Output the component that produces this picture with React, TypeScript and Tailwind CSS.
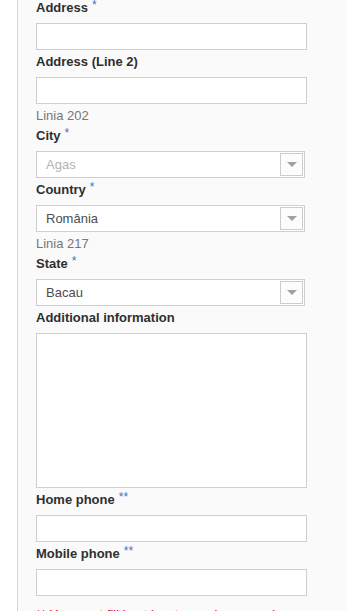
import React from "react";

function Req({ n = 1 }: { n?: number }) {
  return (
    <span className="relative -top-[3px] ml-[4px] text-[12px] font-normal text-[#3f74c0]">
      {n === 2 ? "**" : "*"}
    </span>
  );
}

function Label({ children, first }: { children: React.ReactNode; first?: boolean }) {
  return (
    <div
      className={`${first ? "mt-[-1px]" : "mt-[3px]"} mb-[6px] leading-[18px] font-bold text-[#2f2f2f]`}
    >
      {children}
    </div>
  );
}

function TextInput() {
  return <input className="block h-[27px] w-[271px] border border-[#cfcfcf] bg-white" />;
}

function Note({ children }: { children: React.ReactNode }) {
  return <div className="mt-[4px] leading-[16px] text-[#777]">{children}</div>;
}

function Select({ value, disabled }: { value: string; disabled?: boolean }) {
  return (
    <div className="flex h-[27px] w-[269px] items-center border border-[#cfcfcf] bg-white">
      <span className={`flex-1 pl-[9px] ${disabled ? "text-[#b3b3b3]" : "text-[#4d4d4d]"}`}>
        {value}
      </span>
      <div className="mr-px flex h-[23px] w-[23px] items-center justify-center border border-[#cccccc] bg-[#fcfcfc]">
        <div className="h-0 w-0 border-l-[5px] border-r-[5px] border-t-[5px] border-l-transparent border-r-transparent border-t-[#a0a0a0]" />
      </div>
    </div>
  );
}

export default function App() {
  return (
    <div className="flex h-[611px] overflow-hidden bg-white font-['Liberation_Sans',Arial,sans-serif] text-[13px]">
      <div className="w-[17px] shrink-0 bg-white" />
      <div className="flex-1 border-l border-[#d6d6d6] bg-[#fafafa] pl-[18px]">
        <Label first>
          Address<Req />
        </Label>
        <TextInput />

        <Label>Address (Line 2)</Label>
        <TextInput />
        <Note>Linia 202</Note>

        <Label>
          City<Req />
        </Label>
        <Select value="Agas" disabled />

        <Label>
          Country<Req />
        </Label>
        <Select value="România" />
        <Note>Linia 217</Note>

        <Label>
          State<Req />
        </Label>
        <Select value="Bacau" />

        <Label>Additional information</Label>
        <textarea className="block h-[155px] w-[271px] resize-none border border-[#cfcfcf] bg-white" />

        <Label>
          Home phone<Req n={2} />
        </Label>
        <TextInput />

        <Label>
          Mobile phone<Req n={2} />
        </Label>
        <TextInput />

        <div className="mt-[11px] leading-[16px] text-[#ff0000]">
          ** You must fill in at least one phone number
        </div>
      </div>
    </div>
  );
}
